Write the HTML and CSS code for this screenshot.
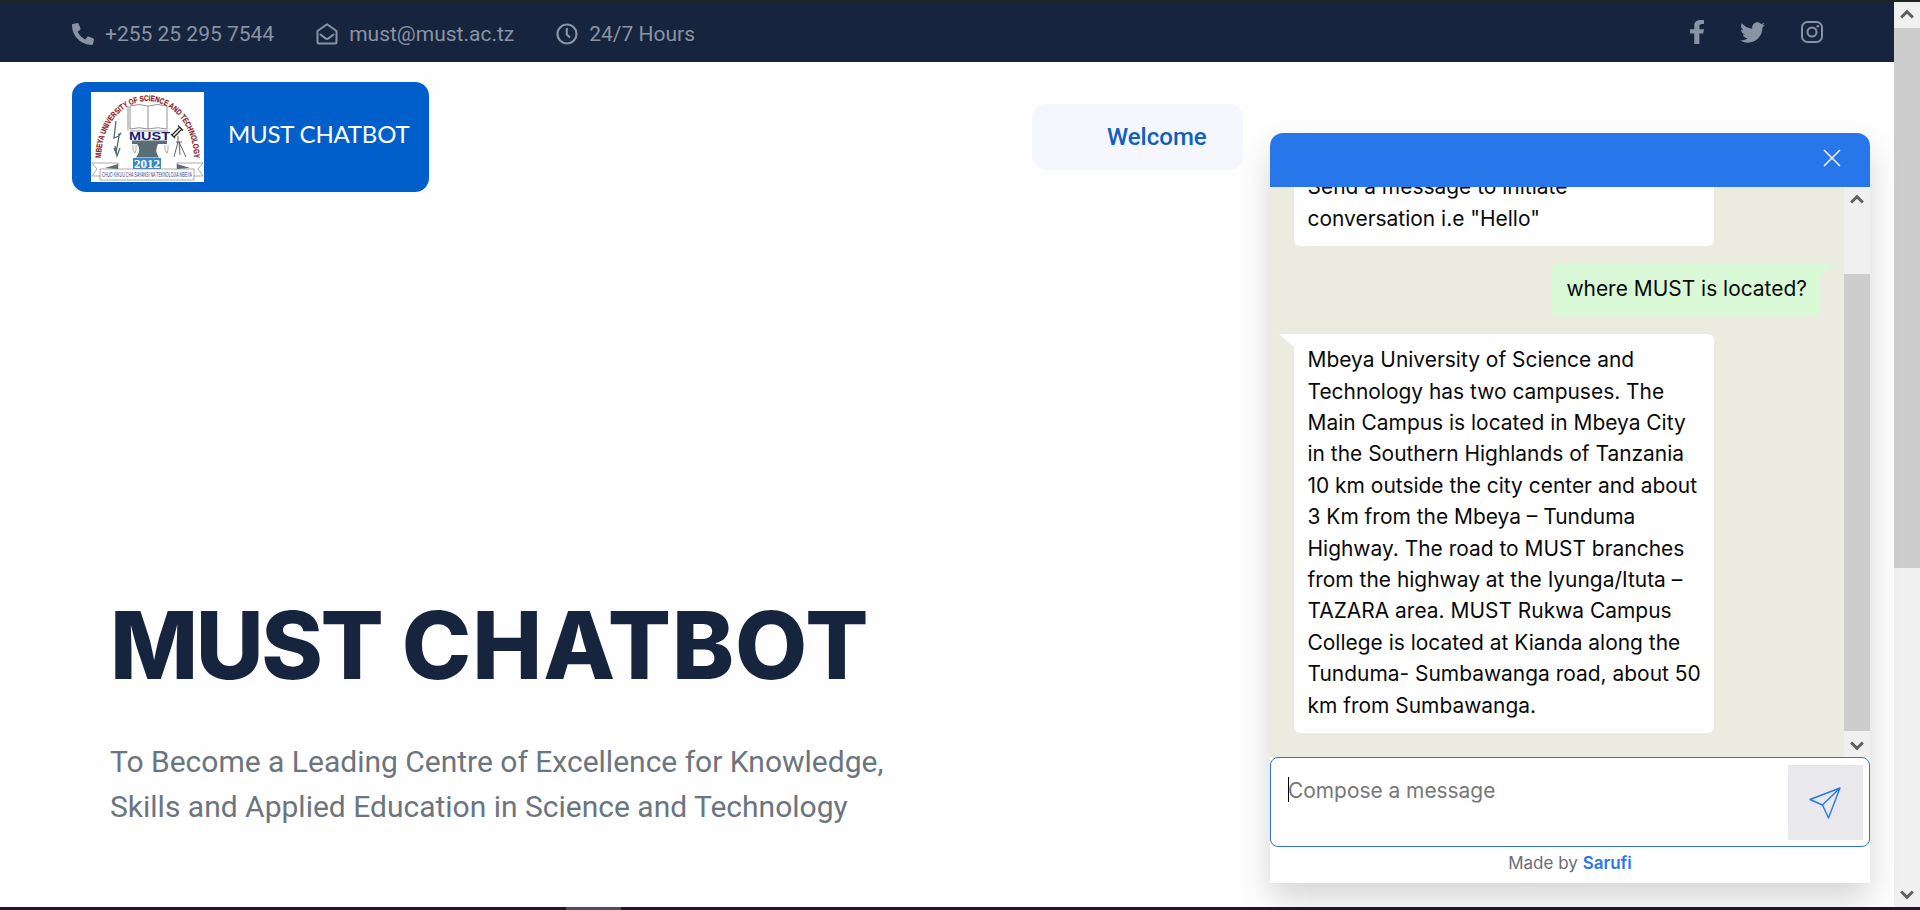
FILE: index.html
```html
<!DOCTYPE html>
<html lang="en">
<head>
<meta charset="utf-8">
<title>MUST Chatbot</title>
<link rel="stylesheet" href="styles.css">
</head>
<body>
<div class="window">
  <div class="viewport">
    <div class="page">
      <header class="topbar">
        <div class="contacts">
          <span class="contact"><svg class="contact-icon" viewBox="0 0 512 512"><path fill="currentColor" d="M493.400 24.600l-104-24c-11.300-2.600-22.900 3.300-27.500 13.900l-48 112c-4.200 9.800-1.400 21.300 6.900 28l60.600 49.600c-36 76.700-98.900 140.500-177.200 177.200l-49.600-60.600c-6.800-8.300-18.200-11.100-28-6.900l-112 48C3.900 366.500-2 378.100.600 389.400l24 104C27.100 504.200 36.700 512 48 512c256.100 0 464-207.500 464-464 0-11.200-7.700-20.900-18.600-23.400z" transform="matrix(-1 0 0 1 512 0)"/></svg><span class="phone">+255 25 295 7544</span></span>
          <span class="contact"><svg class="contact-icon" viewBox="0 0 22 22" fill="none" stroke="currentColor" stroke-width="2" stroke-linejoin="round"><path d="M1.500 8 11 1.300 20.500 8V19.500Q20.500 20.500 19.500 20.500H2.500Q1.500 20.500 1.500 19.500Z"/><path d="M4.500 11.500 9.500 15.400Q11 16.500 12.500 15.400L17.500 11.500" stroke-linecap="round"/></svg><span class="mail">must@must.ac.tz</span></span>
          <span class="contact"><svg class="contact-icon" viewBox="0 0 22 22" fill="none" stroke="currentColor" stroke-width="2.200"><circle cx="11" cy="11" r="9.500"/><path d="M10.800 5V11.500L14 14.300"/></svg><span class="hours">24/7 Hours</span></span>
        </div>
        <div class="socials">
          <svg class="fb" viewBox="22 0 272 512" preserveAspectRatio="none"><path fill="currentColor" d="M279.140 288l14.220-92.660h-88.910v-60.130c0-25.350 12.420-50.060 52.240-50.060h40.420V6.260S260.430 0 225.360 0c-73.220 0-121.080 44.380-121.080 124.720v70.620H22.890V288h81.390v224h100.170V288z"/></svg>
          <svg class="tw" viewBox="0 0 512 512"><path fill="currentColor" d="M459.370 151.716c.325 4.548.325 9.097.325 13.645 0 138.720-105.583 298.558-298.558 298.558-59.452 0-114.680-17.219-161.137-47.106 8.447.974 16.568 1.299 25.340 1.299 49.055 0 94.213-16.568 130.274-44.832-46.132-.975-84.792-31.188-98.112-72.772 6.498.974 12.995 1.624 19.818 1.624 9.421 0 18.843-1.300 27.614-3.573-48.081-9.747-84.143-51.980-84.143-102.985v-1.299c13.969 7.797 30.214 12.670 47.431 13.319-28.264-18.843-46.781-51.005-46.781-87.391 0-19.492 5.197-37.360 14.294-52.954 51.655 63.675 129.300 105.258 216.365 109.807-1.624-7.797-2.599-15.918-2.599-24.040 0-57.828 46.782-104.934 104.934-104.934 30.213 0 57.502 12.670 76.670 33.137 23.715-4.548 46.456-13.320 66.599-25.340-7.798 24.366-24.366 44.833-46.132 57.827 21.117-2.273 41.584-8.122 60.426-16.243-14.292 20.791-32.161 39.308-52.628 54.253z"/></svg>
          <svg class="ig" viewBox="0 0 22 22" fill="none" stroke="currentColor" stroke-width="2"><rect x="1" y="1" width="20" height="20" rx="5.500"/><circle cx="11" cy="11" r="4.500"/><circle cx="16.800" cy="5.200" r="1.300" fill="currentColor" stroke="none"/></svg>
        </div>
      </header>
      <nav class="nav">
        <a class="brand">
          <svg class="crest" viewBox="0 0 113 90">
            <defs><path id="arch" d="M10 66A46.500 57 0 0 1 103 66V72"/></defs>
            <rect width="113" height="90" fill="#fff"/>
            <text class="arch-text"><textPath href="#arch" textLength="163" lengthAdjust="spacingAndGlyphs">MBEYA UNIVERSITY OF SCIENCE AND TECHNOLOGY</textPath></text>
            <path d="M39 14Q48 11 57 14Q67 11 76 14V37Q67 34.500 57 37Q48 34.500 39 37ZM57 14V37M37 14V38.500M39 39H77" fill="none" stroke="#777" stroke-width=".8"/>
            <path d="M25 29 23 46 28 44 25 61 23 56M28 44 30 41 27 43M24 54 26 64 29 56" fill="none" stroke="#536b72" stroke-width="1.300"/>
            <text class="must" x="38" y="47.500" textLength="41" lengthAdjust="spacingAndGlyphs">MUST</text>
            <path d="M41 48.500H76V52H67Q63 59 68 65.500H45Q51 58 46 52H41Z" fill="#5a6d73"/>
            <path d="M42 53V58L44 61 45 58V53M74 53V58L76 61 77 58V53" fill="none" stroke="#888" stroke-width=".7"/>
            <path d="M81 43 89 35M83 45 91 37M80 42 84 46M87 33.500 92 38.500" fill="none" stroke="#222" stroke-width="1.200"/>
            <path d="M87 44V50L83 65M88 50 95 65M88 50 89 63M85 50H91" fill="none" stroke="#555" stroke-width=".9"/>
            <rect x="42" y="66" width="28" height="11" fill="#3c86c8"/>
            <text class="year" x="43" y="76" textLength="26" lengthAdjust="spacingAndGlyphs">2012</text>
            <path d="M9 77V88H103V77ZM9 84H1L6 77 1 71H27V77M103 84H112L107 77 112 71H86V77" fill="none" stroke="#888" stroke-width=".7"/>
            <path d="M14 76 27 72V77ZM99 76 86 72V77Z" fill="#5a6d73"/>
            <text class="motto" x="11" y="85" textLength="90" lengthAdjust="spacingAndGlyphs">CHUO KIKUU CHA SAYANSI NA TEKNOLOJIA MBEYA</text>
          </svg>
          <span class="brand-name">MUST CHATBOT</span>
        </a>
        <a class="welcome">Welcome</a>
      </nav>
      <main class="hero">
        <h1 class="title"><span class="title-first">MUST</span> <span class="title-second">CHATBOT</span></h1>
        <p class="lead">To Become a Leading Centre of Excellence for Knowledge,<br>Skills and Applied Education in Science and Technology</p>
      </main>
    </div>
    <div class="scrollbar page-scroll">
      <svg class="arrow" viewBox="0 0 12 10"><path d="M1 8 6 3 11 8"/></svg>
      <div class="thumb"></div>
      <svg class="arrow" viewBox="0 0 12 10"><path d="M1 2 6 7 11 2"/></svg>
    </div>
  </div>
  <div class="taskbar"><span class="task-active"></span></div>

  <section class="chat">
    <div class="chat-head"><svg class="close" viewBox="0 0 18 18"><path d="M1 1 17 17M17 1 1 17"/></svg></div>
    <div class="chat-body">
      <div class="messages">
        <div class="bubble bot">Send a message to initiate<br>conversation i.e "Hello"</div>
        <div class="bubble user">where MUST is located?</div>
        <div class="bubble bot tail">Mbeya University of Science and<br>Technology has two campuses. The<br>Main Campus is located in Mbeya City<br>in the Southern Highlands of Tanzania<br>10 km outside the city center and about<br>3 Km from the Mbeya – Tunduma<br>Highway. The road to MUST branches<br>from the highway at the Iyunga/Ituta –<br>TAZARA area. MUST Rukwa Campus<br>College is located at Kianda along the<br>Tunduma- Sumbawanga road, about 50<br>km from Sumbawanga.</div>
      </div>
      <div class="scrollbar chat-scroll">
        <svg class="arrow" viewBox="0 0 12 10"><path d="M1 8 6 3 11 8"/></svg>
        <div class="thumb"></div>
        <svg class="arrow" viewBox="0 0 12 10"><path d="M1 2 6 7 11 2"/></svg>
      </div>
    </div>
    <div class="compose">
      <div class="field"><span class="caret"></span><span class="placeholder">Compose a message</span></div>
      <div class="send"><svg class="plane" viewBox="0 0 32 32"><path d="M1 12.500 31 1 19.500 31 13.500 18ZM13.500 18 31 1"/></svg></div>
    </div>
    <div class="credit">Made by <b class="sarufi">Sarufi</b></div>
  </section>
</div>
</body>
</html>
```
FILE: styles.css
```css
* { box-sizing: border-box; }
body { margin: 0; background: #fff; font-family: Roboto, sans-serif; }
.window { display: flex; flex-direction: column; height: 910px; overflow: hidden; border-top: 2px solid #20261f; position: relative; }
.viewport { display: flex; flex: 1; min-height: 0; }
.page { flex: 1; background: #fefefe; }
.topbar { display: flex; justify-content: space-between; align-items: center; height: 60px; padding: 0 71px 0 72px; background: #16243d; color: #8a93a4; font-size: 21px; }
.contacts { display: flex; gap: 42px; padding-top: 3px; }
.contact { display: flex; align-items: center; gap: 11px; white-space: nowrap; }
.contact-icon { width: 22px; height: 22px; }
.socials { display: flex; align-items: center; gap: 36px; }
.fb { width: 14px; height: 24px; }
.tw { width: 25px; height: 25px; }
.ig { width: 22px; height: 22px; }
.nav { display: flex; justify-content: space-between; align-items: flex-start; padding: 20px 651px 0 72px; }
.brand { display: flex; align-items: center; width: 357px; height: 110px; padding-left: 19px; gap: 24px; background: #005fcb; border-radius: 14px; }
.crest { width: 113px; height: 90px; flex: none; }
.arch-text { font: 900 8px "Liberation Sans", sans-serif; fill: #8c1d2b; stroke: #8c1d2b; stroke-width: .2px; }
.must { font: 700 10px "Liberation Sans", sans-serif; fill: #1c1c78; }
.year { font: 700 12px "Liberation Serif", serif; fill: #fff; }
.motto { font: 400 6.800px "Liberation Sans", sans-serif; fill: #3d3d86; }
.brand-name { padding-bottom: 8px; font: 400 24px Lato, sans-serif; letter-spacing: -.2px; color: #fff; white-space: nowrap; }
.welcome { width: 211px; height: 66px; margin-top: 22px; padding-left: 75px; line-height: 66px; background: #f6f7fd; border-radius: 14px; font-size: 24px; font-weight: 500; color: #0f60bf; }
.hero { padding: 397px 0 0 110px; }
.title { margin: 0; font: 800 93.500px/112px Inter, sans-serif; color: #16243d; white-space: nowrap; }
.title-first { letter-spacing: -2.500px; }
.title-second { letter-spacing: 1px; }
.lead { margin: 38px 0 0; font-size: 30px; line-height: 45px; color: #6c757d; white-space: nowrap; }
.taskbar { height: 3px; padding-left: 566px; background: #24152b; }
.task-active { display: block; width: 55px; height: 3px; background: #554a5c; }
.scrollbar { display: flex; flex-direction: column; align-items: center; width: 26px; background: #f0f0f0; }
.thumb { width: 26px; background: #cdcdcd; }
.arrow { width: 14px; height: 12px; fill: none; stroke: #606060; stroke-width: 2.500; }
.page-scroll { padding: 6px 0; }
.page-scroll .thumb { height: 540px; margin: 8px 0 auto; }
.chat { position: absolute; left: 1270px; top: 131px; display: flex; flex-direction: column; width: 600px; height: 750px; background: #fff; border-radius: 13px 13px 0 0; box-shadow: 0 16px 32px rgba(0,0,0,.16); font-family: Inter, sans-serif; }
.chat-head { display: flex; justify-content: flex-end; align-items: center; height: 54px; padding: 0 29px 5px 0; background: #2877ea; border-radius: 13px 13px 0 0; }
.close { width: 18px; height: 18px; fill: none; stroke: #fff; stroke-width: 1.500; }
.chat-body { display: flex; height: 570px; background: #ebebdf; overflow: hidden; }
.messages { display: flex; flex: 1; flex-direction: column; justify-content: flex-end; gap: 18px; padding: 0 24px; padding-bottom: 24px; }
.bubble { position: relative; flex: none; padding: 10px 13px 12px 13.500px; border-radius: 6px; font-size: 20.950px; line-height: 31.400px; color: #0a0a0a; white-space: nowrap; }
.bot { align-self: flex-start; width: 420px; background: #fff; }
.user { align-self: flex-end; height: 52px; padding: 9px 13px 0 14px; background: #d9f8d5; border-top-right-radius: 0; }
.tail { border-top-left-radius: 0; }
.tail::before { content: ""; position: absolute; left: -15px; top: 0; border-top: 13px solid #fff; border-left: 15px solid transparent; }
.user::after { content: ""; position: absolute; right: -15px; top: 0; border-top: 13px solid #d9f8d5; border-right: 15px solid transparent; }
.chat-scroll { padding: 6px 0 5px; }
.chat-scroll .thumb { height: 457px; margin: 69px 0 auto; }
.compose { display: flex; justify-content: space-between; height: 90px; padding: 7px 6px 6px 17px; border: 1px solid #2f73d4; border-radius: 8px; background: #fff; }
.field { display: flex; align-items: flex-start; padding-top: 12px; font-size: 20.900px; line-height: 27px; color: #777; }
.caret { width: 1px; height: 25px; margin-right: -1px; background: #000; }
.send { display: flex; align-items: center; justify-content: center; width: 75px; height: 75px; padding-right: 2px; background: #e8e8ed; }
.plane { width: 32px; height: 32px; fill: none; stroke: #2877ea; stroke-width: 1.400; stroke-linejoin: round; }
.credit { padding-top: 6px; text-align: center; font-size: 17px; line-height: 21px; color: #6b6e76; }
.sarufi { font-weight: 600; color: #2877ea; }
```
